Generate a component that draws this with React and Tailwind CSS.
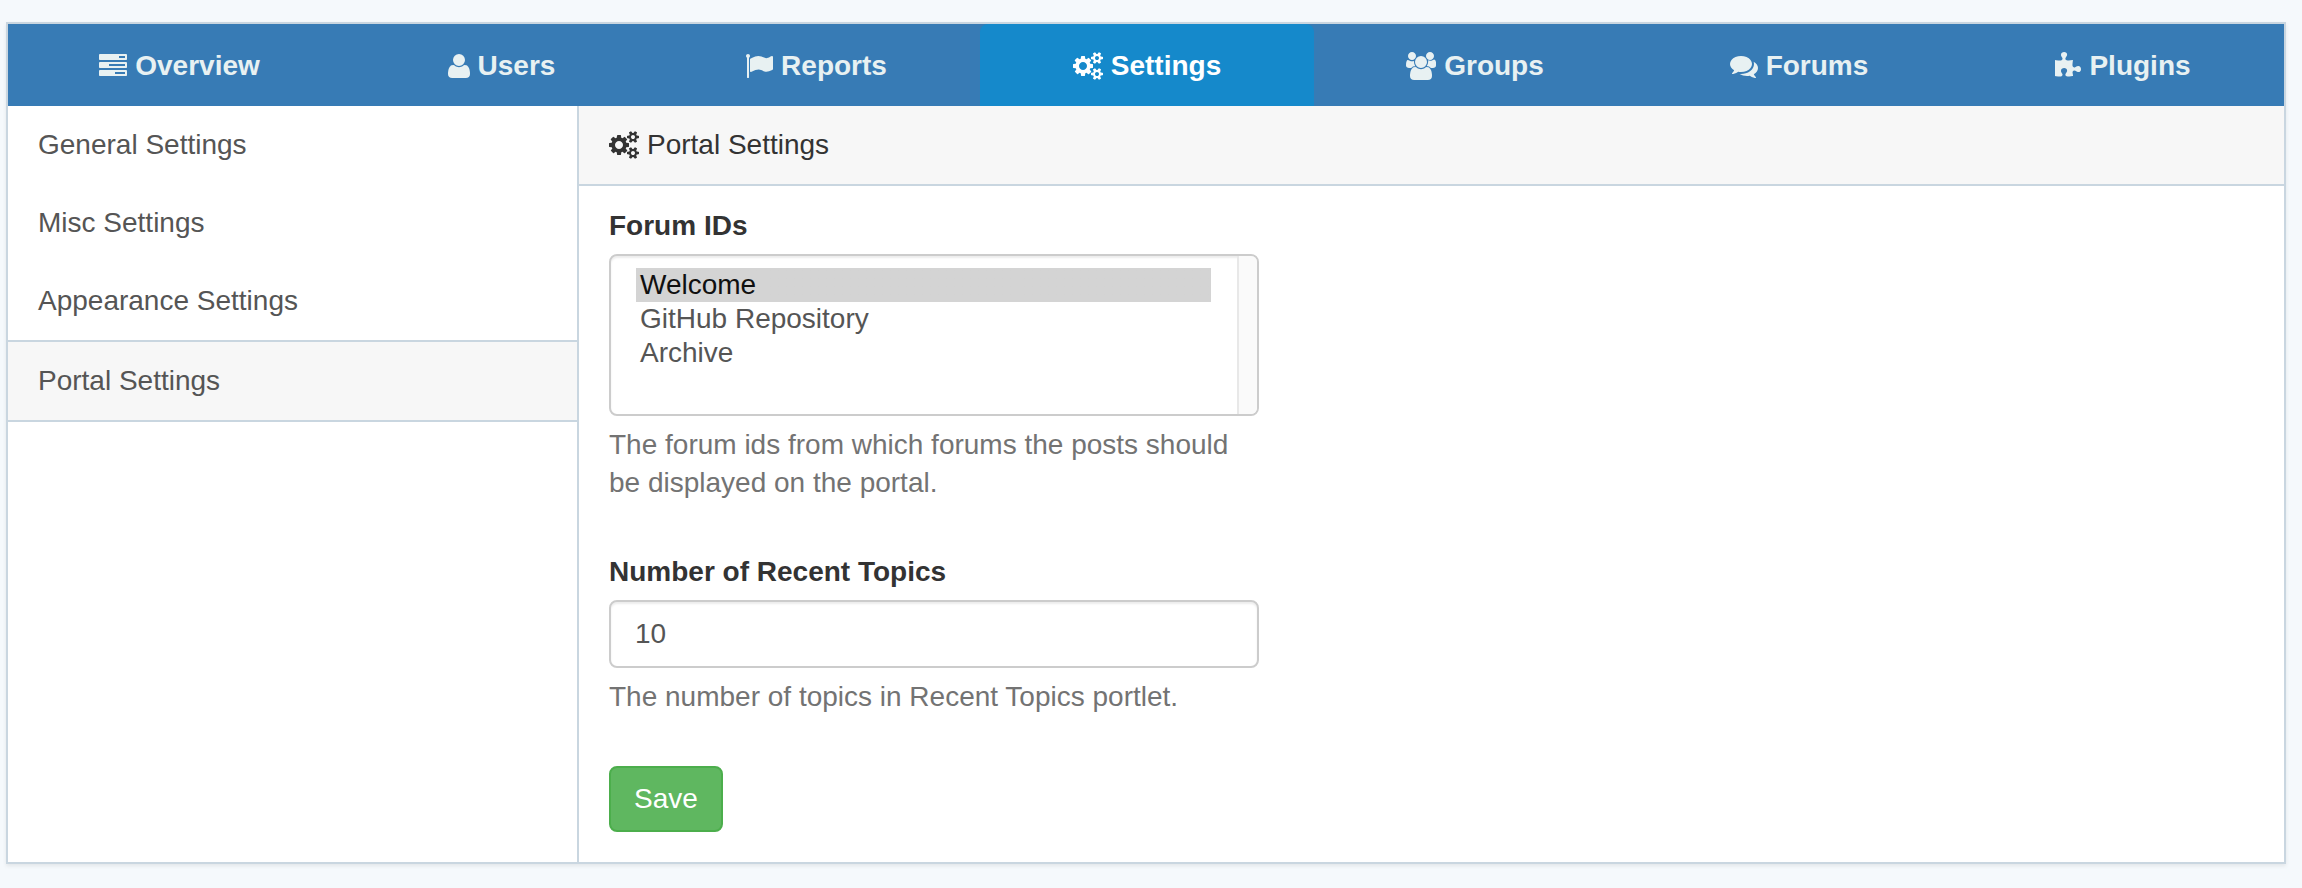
const ICONS = {
  tasks: {
    viewBox: "0 0 1792 1792",
    size: "w-7",
    d: "M1024 1408h640v-128h-640v128zm-384-512h1024v-128h-1024v128zm640-512h384v-128h-384v128zm512 832v256q0 26-19 45t-45 19h-1664q-26 0-45-19t-19-45v-256q0-26 19-45t45-19h1664q26 0 45 19t19 45zm0-512v256q0 26-19 45t-45 19h-1664q-26 0-45-19t-19-45v-256q0-26 19-45t45-19h1664q26 0 45 19t19 45zm0-512v256q0 26-19 45t-45 19h-1664q-26 0-45-19t-19-45v-256q0-26 19-45t45-19h1664q26 0 45 19t19 45z",
  },
  user: {
    viewBox: "192 0 1408 1792",
    size: "w-[22px]",
    d: "M1600 1405q0 120-73 189.5t-194 69.5h-874q-121 0-194-69.5t-73-189.5q0-53 3.5-103.5t14-109 26.5-108.5 43-97.5 62-81 85.5-53.5 111.5-20q9 0 42 21.5t74.5 48 108 48 133.5 21.5 133.5-21.5 108-48 74.5-48 42-21.5q61 0 111.5 20t85.5 53.5 62 81 43 97.5 26.5 108.5 14 109 3.5 103.5zm-320-893q0 159-112.5 271.5t-271.5 112.5-271.5-112.5-112.5-271.5 112.5-271.5 271.5-112.5 271.5 112.5 112.5 271.5z",
  },
  flag: {
    viewBox: "0 0 1792 1792",
    size: "w-7",
    d: "M320 256q0 72-64 110v1266q0 13-9.5 22.5t-22.5 9.5h-64q-13 0-22.5-9.5t-9.5-22.5v-1266q-64-38-64-110 0-53 37.5-90.5t90.5-37.5 90.5 37.5 37.5 90.5zm1472 64v763q0 25-12.5 38.5t-39.5 27.5q-215 116-369 116-61 0-123.5-22t-108.5-48-115.5-48-142.5-22q-192 0-464 146-17 9-33 9-26 0-45-19t-19-45v-742q0-32 31-55 21-14 79-43 236-120 421-120 107 0 200 29t219 88q38 19 88 19 54 0 117.5-21t110-47 88-47 54.5-21q26 0 45 19t19 45z",
  },
  cogs: {
    viewBox: "0 0 1920 1792",
    size: "w-[30px]",
    d: "M896 896q0-106-75-181t-181-75-181 75-75 181 75 181 181 75 181-75 75-181zm768 512q0-52-38-90t-90-38-90 38-38 90q0 53 37.5 90.5t90.5 37.5 90.5-37.5 37.5-90.5zm0-1024q0-52-38-90t-90-38-90 38-38 90q0 53 37.5 90.5t90.5 37.5 90.5-37.5 37.5-90.5zm-384 421v185q0 10-7 19.5t-16 10.5l-155 24q-11 35-32 76 34 48 90 115 7 11 7 20 0 12-7 19-23 30-82.5 89.5t-78.5 59.5q-11 0-21-7l-115-90q-37 19-77 31-11 108-23 155-7 24-30 24h-186q-11 0-20-7.5t-10-17.5l-23-153q-34-10-75-31l-118 89q-7 7-20 7-11 0-21-8-144-133-144-160 0-9 7-19 10-14 41-53t47-61q-23-44-35-82l-152-24q-10-1-17-9.5t-7-19.5v-185q0-10 7-19.5t16-10.5l155-24q11-35 32-76-34-48-90-115-7-11-7-20 0-12 7-20 22-30 82-89t79-59q11 0 21 7l115 90q34-18 77-32 11-108 23-154 7-24 30-24h186q11 0 20 7.5t10 17.5l23 153q34 10 75 31l118-89q8-7 20-7 11 0 21 8 144 133 144 160 0 8-7 19-12 16-42 54t-45 60q23 48 34 82l152 23q10 2 17 10.5t7 19.5zm640 533v140q0 16-149 31-12 27-30 52 51 113 51 138 0 4-4 7-122 71-124 71-8 0-46-47t-52-68q-20 2-30 2t-30-2q-14 21-52 68t-46 47q-2 0-124-71-4-3-4-7 0-25 51-138-18-25-30-52-149-15-149-31v-140q0-16 149-31 13-29 30-52-51-113-51-138 0-4 4-7 4-2 35-20t59-34 30-16q8 0 46 46.5t52 67.5q20-2 30-2t30 2q51-71 92-112l6-2q4 0 124 70 4 3 4 7 0 25-51 138 17 23 30 52 149 15 149 31zm0-1024v140q0 16-149 31-12 27-30 52 51 113 51 138 0 4-4 7-122 71-124 71-8 0-46-47t-52-68q-20 2-30 2t-30-2q-14 21-52 68t-46 47q-2 0-124-71-4-3-4-7 0-25 51-138-18-25-30-52-149-15-149-31v-140q0-16 149-31 13-29 30-52-51-113-51-138 0-4 4-7 4-2 35-20t59-34 30-16q8 0 46 46.5t52 67.5q20-2 30-2t30 2q51-71 92-112l6-2q4 0 124 70 4 3 4 7 0 25-51 138 17 23 30 52 149 15 149 31z",
  },
  group: {
    viewBox: "64 0 1920 1792",
    size: "w-[30px]",
    d: "M657 896q-162 5-265 128h-134q-82 0-138-40.5t-56-118.5q0-353 124-353 6 0 43.5 21t97.5 42.5 119 21.5q67 0 133-23-5 37-5 66 0 159 93 295zm1071 637q0 120-73 189.5t-194 69.5h-874q-121 0-194-69.5t-73-189.5q0-53 3.5-103.5t14-109 26.5-108.5 43-97.5 62-81 85.5-53.5 111.5-20q10 0 43 21.5t73 48 107 48 135 21.5 135-21.5 107-48 73-48 43-21.5q61 0 111.5 20t85.5 53.5 62 81 43 97.5 26.5 108.5 14 109 3.5 103.5zm-1024-1277q0 106-75 181t-181 75-181-75-75-181 75-181 181-75 181 75 75 181zm704 384q0 159-112.5 271.5t-271.5 112.5-271.5-112.5-112.5-271.5 112.5-271.5 271.5-112.5 271.5 112.5 112.5 271.5zm576 225q0 78-56 118.5t-138 40.5h-134q-103-123-265-128 93-136 93-295 0-29-5-66 66 23 133 23 59 0 119-21.5t97.5-42.5 43.5-21q124 0 124 353zm-128-609q0 106-75 181t-181 75-181-75-75-181 75-181 181-75 181 75 75 181z",
  },
  comments: {
    viewBox: "0 0 1792 1792",
    size: "w-7",
    d: "M1408 768q0 139-94 257t-256.5 186.5-353.5 68.5q-86 0-176-16-124 88-278 128-36 9-86 16h-3q-11 0-20.5-8t-11.5-21q-1-3-1-6.5t.5-6.5 2-6l2.5-5 3.5-5.5 4-5 4.5-5 4-4.5q5-6 23-25t26-29.5 22.5-29 25-38.5 20.5-44q-124-72-195-177t-71-224q0-139 94-257t256.5-186.5 353.5-68.5 353.5 68.5 256.5 186.5 94 257zm384 256q0 120-71 224.5t-195 176.5q10 24 20.5 44t25 38.5 22.5 29 26 29.5 23 25q1 1 4 4.5t4.5 5 4 5 3.5 5.5l2.5 5 2 6 .5 6.5-1 6.5q-3 14-13 22t-22 7q-50-7-86-16-154-40-278-128-90 16-176 16-271 0-472-132 58 4 88 4 161 0 309-45t264-129q125-92 192-212t67-254q0-77-23-152 129 71 204 178t75 230z",
  },
  puzzle: {
    viewBox: "64 0 1664 1792",
    size: "w-[26px]",
    d: "M1728 1098q0 81-44.5 135t-123.5 54q-41 0-77.5-17.5t-59-38-56.5-38-71-17.5q-110 0-110 124 0 39 16 115t15 115v5q-22 0-33 1-34 3-97.5 11.5t-115.5 13.5-98 5q-61 0-103-26.5t-42-83.5q0-37 17.5-71t38-56.5 38-59 17.5-77.5q0-79-54-123.5t-135-44.5q-84 0-143 45.5t-59 127.5q0 43 15 83t33.5 64.5 33.5 53 15 50.5q0 45-46 89-37 35-117 35-95 0-245-24-9-2-27.5-4t-27.5-4l-13-2q-1 0-3-1-2 0-2-1v-1024q2 1 17.5 3.5t34 5 21.5 3.5q150 24 245 24 80 0 117-35 46-44 46-89 0-22-15-50.5t-33.5-53-33.5-64.5-15-83q0-82 59-127.5t144-45.5q80 0 134 44.5t54 123.5q0 41-17.5 77.5t-38 59-38 56.5-17.5 71q0 57 42 83.5t103 26.5q64 0 180-15t163-17v2q-1 2-3.5 17.5t-5 34-3.5 21.5q-24 150-24 245 0 80 35 117 44 46 89 46 22 0 50.5-15t53-33.5 64.5-33.5 83-15q82 0 127.5 59t45.5 143z",
  },
};

const NAV = [
  { label: "Overview", icon: "tasks" },
  { label: "Users", icon: "user" },
  { label: "Reports", icon: "flag" },
  { label: "Settings", icon: "cogs", active: true },
  { label: "Groups", icon: "group" },
  { label: "Forums", icon: "comments" },
  { label: "Plugins", icon: "puzzle" },
];

const SECTIONS = [
  { label: "General Settings" },
  { label: "Misc Settings" },
  { label: "Appearance Settings" },
  { label: "Portal Settings", active: true },
];

function Icon({ name }) {
  const { viewBox, size, d } = ICONS[name];
  return (
    <svg viewBox={viewBox} fill="currentColor" aria-hidden="true" className={`h-7 shrink-0 ${size}`}>
      <path d={d} />
    </svg>
  );
}

function Navigation() {
  return (
    <nav className="grid grid-cols-[343fr_301fr_328fr_334fr_322fr_326fr_322fr] bg-[#377bb5] font-bold">
      {NAV.map(({ label, icon, active }) => (
        <a
          key={label}
          href="#"
          aria-current={active ? "page" : undefined}
          className={`flex items-center justify-center gap-2 pt-[23px] pb-[21px] ${
            active ? "rounded-t-lg bg-[#1589cb] text-white" : "text-[#e8f1f2]"
          }`}
        >
          <Icon name={icon} />
          {label}
        </a>
      ))}
    </nav>
  );
}

function Sidebar() {
  return (
    <aside className="w-1/4 shrink-0 text-[#555555]">
      {SECTIONS.map(({ label, active }) => (
        <a
          key={label}
          href="#"
          aria-current={active ? "page" : undefined}
          className={`block px-[30px] py-5 ${active ? "border-y-2 border-[#c9d6e0] bg-[#f7f7f7]" : ""}`}
        >
          {label}
        </a>
      ))}
    </aside>
  );
}

function SettingsForm() {
  return (
    <form className="w-5/12 px-[30px] pt-[21px] pb-[30px]">
      <label htmlFor="forum-ids" className="block font-bold">
        Forum IDs
      </label>
      <div className="relative mt-[9px]">
        <select
          id="forum-ids"
          multiple
          size={4}
          defaultValue={["welcome"]}
          className="block h-[162px] w-full overflow-hidden rounded-lg border-2 border-[#cccccc] bg-white py-3 pr-[46px] pl-[25px] leading-8 text-[#555555] shadow-[inset_0_2px_2px_rgba(0,0,0,0.075)]"
        >
          <option
            value="welcome"
            className="h-[34px] px-1 pt-px checked:bg-[#d4d4d4] checked:bg-linear-to-r checked:from-[#d4d4d4] checked:to-[#d4d4d4]"
          >
            Welcome
          </option>
          <option value="github" className="h-[34px] px-1 pt-px">
            GitHub Repository
          </option>
          <option value="archive" className="h-[34px] px-1 pt-px">
            Archive
          </option>
        </select>
        <div className="pointer-events-none absolute inset-y-0.5 right-0.5 w-5 rounded-r-md border-l-2 border-[#e8e8e8] bg-[#fafafa]" />
      </div>
      <p className="mt-[10px] text-[#737373]">
        The forum ids from which forums the posts should be displayed on the portal.
      </p>

      <label htmlFor="recent-topics" className="mt-[51px] block font-bold">
        Number of Recent Topics
      </label>
      <input
        id="recent-topics"
        type="text"
        defaultValue="10"
        className="mt-[9px] block h-[68px] w-full rounded-lg border-2 border-[#cccccc] bg-white px-6 text-[#555555] shadow-[inset_0_2px_2px_rgba(0,0,0,0.075)]"
      />
      <p className="mt-[10px] text-[#737373]">The number of topics in Recent Topics portlet.</p>

      <button
        type="submit"
        className="mt-[50px] block h-[66px] rounded-lg border-2 border-[#4cae4c] bg-[#5fb760] px-[23px] text-white"
      >
        Save
      </button>
    </form>
  );
}

export default function App() {
  return (
    <div className="min-h-screen bg-[#f5f9fc] pt-[22px] pr-4 pb-6 pl-1.5 font-['Liberation_Sans',Arial,sans-serif] text-[28px] leading-[38px] text-[#333333]">
      <div className="border-2 border-[#c9d6e0] bg-white shadow-[0_2px_4px_rgba(0,0,0,0.08)]">
        <Navigation />
        <div className="flex">
          <Sidebar />
          <main className="min-w-0 flex-1 border-l-2 border-[#c9d6e0]">
            <h1 className="flex items-center gap-2 border-b-2 border-[#c9d6e0] bg-[#f7f7f7] px-[30px] py-5">
              <Icon name="cogs" />
              Portal Settings
            </h1>
            <SettingsForm />
          </main>
        </div>
      </div>
    </div>
  );
}
